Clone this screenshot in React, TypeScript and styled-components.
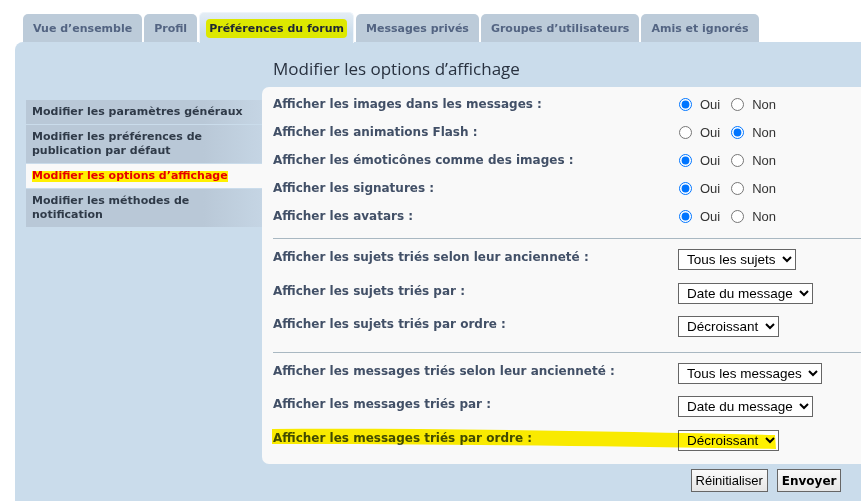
import React from 'react'
import styled, { createGlobalStyle } from 'styled-components'

const GlobalStyle = createGlobalStyle`
  html, body {
    margin: 0;
    padding: 0;
    background: #fff;
    overflow: hidden;
  }
  body {
    font-family: "DejaVu Sans", Verdana, sans-serif;
    color: #28313f;
  }
`

/*---Data---*/
const tabs = [
  { title: 'Vue d’ensemble' },
  { title: 'Profil' },
  { title: 'Préférences du forum', active: true },
  { title: 'Messages privés' },
  { title: 'Groupes d’utilisateurs' },
  { title: 'Amis et ignorés' },
]

const menu = [
  { title: 'Modifier les paramètres généraux' },
  { title: 'Modifier les préférences de publication par défaut' },
  { title: 'Modifier les options d’affichage', active: true },
  { title: 'Modifier les méthodes de notification' },
]

const radios = [
  { label: 'Afficher les images dans les messages :', yes: true },
  { label: 'Afficher les animations Flash :', yes: false },
  { label: 'Afficher les émoticônes comme des images :', yes: true },
  { label: 'Afficher les signatures :', yes: true },
  { label: 'Afficher les avatars :', yes: true },
]

const topicSorts = [
  { label: 'Afficher les sujets triés selon leur ancienneté :', value: 'Tous les sujets' },
  { label: 'Afficher les sujets triés par :', value: 'Date du message' },
  { label: 'Afficher les sujets triés par ordre :', value: 'Décroissant' },
]

const postSorts = [
  { label: 'Afficher les messages triés selon leur ancienneté :', value: 'Tous les messages' },
  { label: 'Afficher les messages triés par :', value: 'Date du message' },
  { label: 'Afficher les messages triés par ordre :', value: 'Décroissant', marked: true },
]

/*---Styles---*/
const Page = styled.div`
  padding: 13px 0 0 15px;
  width: 1300px;
`

const TabBar = styled.ul`
  list-style: none;
  margin: 0;
  padding: 0 0 0 8px;
  display: flex;
  align-items: flex-end;
  gap: 2px;
  height: 29px;
  position: relative;
  z-index: 1;
`

const Tab = styled.li<{ $active?: boolean }>`
  box-sizing: border-box;
  height: ${p => (p.$active ? '31px' : '28px')};
  margin-bottom: ${p => (p.$active ? '-1px' : '0')};
  padding: 0 ${p => (p.$active ? '9px' : '10px')};
  display: flex;
  align-items: center;
  border-radius: 5px 5px 0 0;
  font-size: 11px;
  font-weight: bold;
  white-space: nowrap;
  color: ${p => (p.$active ? '#1f2733' : '#536482')};
  background: ${p => (p.$active ? 'linear-gradient(#e4edf5, #cadceb 70%)' : '#bccbd9')};
  border: ${p => (p.$active ? '1px solid #eef4fa' : 'none')};
  border-bottom: none;
`

const TabMark = styled.span`
  background: #dde800;
  border-radius: 4px;
  padding: 3px 3px;
  margin: 0 -3px;
`

const Panel = styled.div`
  background: #cadceb;
  border-radius: 8px 0 0 0;
  padding: 0 0 20px 11px;
  display: grid;
  grid-template-columns: 236px 1008px;
  grid-template-rows: 45px auto;
  min-height: 440px;
`

const Heading = styled.h2`
  grid-column: 2;
  margin: 0;
  padding: 16px 0 0 11px;
  font-family: "Open Sans", "Noto Sans", sans-serif;
  font-weight: normal;
  font-size: 17px;
  line-height: 22px;
  color: #28313f;
`

const SideMenu = styled.ul`
  grid-column: 1;
  grid-row: 2;
  list-style: none;
  margin: 13px 0 0;
  padding: 0;
  display: flex;
  flex-direction: column;
  gap: 1px;
`

const MenuItem = styled.li<{ $active?: boolean }>`
  padding: 5px 10px 5px 6px;
  font-size: 11px;
  font-weight: bold;
  line-height: 14px;
  color: ${p => (p.$active ? '#e60000' : '#2f3a48')};
  background: ${p =>
    p.$active ? '#f9f9f9' : 'linear-gradient(to right, #b9c8d7 75%, #c5d5e4)'};
`

const MenuMark = styled.span`
  background: linear-gradient(to bottom, transparent 12%, #fff000 12%, #fff000 98%, transparent 98%);
`

const Main = styled.div`
  grid-column: 2;
  grid-row: 2;
`

const Content = styled.div`
  background: #f9f9f9;
  border-radius: 7px;
  padding: 3px 0 1px 11px;
`

const Rule = styled.hr<{ $top: number }>`
  border: none;
  border-top: 1px solid #a9b8c2;
  margin: ${p => p.$top}px 0 0;
`

const SortGroup = styled.div`
  padding-top: 10px;
`

const Row = styled.div<{ $tall?: boolean }>`
  position: relative;
  display: grid;
  grid-template-columns: 405px 1fr;
  align-items: ${p => (p.$tall ? 'start' : 'center')};
  height: ${p => (p.$tall ? '33.5px' : '28px')};
`

const Label = styled.span<{ $tall?: boolean }>`
  font-size: 12px;
  font-weight: bold;
  line-height: 14px;
  color: #425067;
  white-space: nowrap;
  padding-top: ${p => (p.$tall ? '1px' : '0')};
  position: relative;
  z-index: 1;
`

const Choices = styled.div`
  display: flex;
  align-items: center;
  font-family: "Liberation Sans", Arial, sans-serif;
  font-size: 13px;
  color: #333;
`

const Choice = styled.label`
  display: flex;
  align-items: center;
  margin-right: 10px;
`

const Radio = styled.input`
  width: 13px;
  height: 13px;
  margin: 0 8px 0 1px;
  accent-color: #0075ff;
`

const Select = styled.select`
  position: relative;
  z-index: 1;
  justify-self: start;
  height: 21px;
  padding: 0 3px 0 4px;
  font-family: "Liberation Sans", Arial, sans-serif;
  font-size: 13.5px;
  color: #000;
  background: #fff;
  border: 1px solid #666;
  border-radius: 0;
`

const Streak = styled.svg`
  position: absolute;
  left: -1px;
  top: -2px;
  width: 504px;
  height: 23px;
  pointer-events: none;
  z-index: 2;
  mix-blend-mode: multiply;
`

const Buttons = styled.div`
  display: flex;
  justify-content: center;
  gap: 9px;
  padding-top: 5px;
`

const Button = styled.button<{ $primary?: boolean }>`
  height: 23px;
  padding: 0 4px;
  font-family: ${p => (p.$primary ? '"DejaVu Sans", Verdana, sans-serif' : '"Liberation Sans", Arial, sans-serif')};
  font-size: ${p => (p.$primary ? '12px' : '13px')};
  font-weight: ${p => (p.$primary ? 'bold' : 'normal')};
  color: #000;
  background: linear-gradient(#fafafa, #e6e6e6);
  border: 1px solid #666;
  border-radius: 0;
`

function SortRows({ rows }: { rows: { label: string; value: string; marked?: boolean }[] }) {
  return (
    <SortGroup>
      {rows.map((row, index) => (
        <Row $tall key={index}>
          <Label $tall>{row.label}</Label>
          <Select defaultValue={row.value}>
            <option>{row.value}</option>
          </Select>
          {row.marked && (
            <Streak viewBox="0 0 504 23">
              <path d="M0 1 C150 0 320 3 503 7 L504 21 C320 18 150 16 0 16 Z" fill="#fff000" />
            </Streak>
          )}
        </Row>
      ))}
    </SortGroup>
  )
}

export default function App() {
  return (
    <>
      <GlobalStyle />
      <Page>
        <TabBar>
          {tabs.map((tab, index) => (
            <Tab $active={tab.active} key={index}>
              {tab.active ? <TabMark>{tab.title}</TabMark> : tab.title}
            </Tab>
          ))}
        </TabBar>

        <Panel>
          <Heading>Modifier les options d’affichage</Heading>

          <SideMenu>
            {menu.map((item, index) => (
              <MenuItem $active={item.active} key={index}>
                {item.active ? <MenuMark>{item.title}</MenuMark> : item.title}
              </MenuItem>
            ))}
          </SideMenu>

          <Main>
            <Content>
              {radios.map((row, index) => (
                <Row key={index}>
                  <Label>{row.label}</Label>
                  <Choices>
                    <Choice>
                      <Radio type="radio" name={`r${index}`} defaultChecked={row.yes} />
                      Oui
                    </Choice>
                    <Choice>
                      <Radio type="radio" name={`r${index}`} defaultChecked={!row.yes} />
                      Non
                    </Choice>
                  </Choices>
                </Row>
              ))}

              <Rule $top={8} />
              <SortRows rows={topicSorts} />

              <Rule $top={2} />
              <SortRows rows={postSorts} />
            </Content>

            <Buttons>
              <Button>Réinitialiser</Button>
              <Button $primary>Envoyer</Button>
            </Buttons>
          </Main>
        </Panel>
      </Page>
    </>
  )
}
